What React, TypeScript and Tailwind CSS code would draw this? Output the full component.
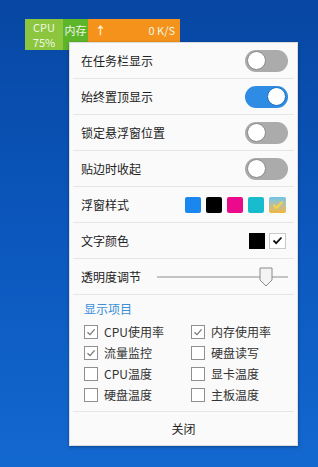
import React from "react";

const font = { fontFamily: '"Noto Sans CJK SC", "Noto Sans", sans-serif' };

const Toggle = ({ on }: { on?: boolean }) => (
  <div
    className={`w-[43px] h-[22px] rounded-full flex items-center px-[2px] ${
      on ? "bg-[#2e8ce4] justify-end" : "bg-[#ababab] justify-start"
    }`}
  >
    <div
      className={`w-[19px] h-[19px] rounded-full bg-white border ${
        on ? "border-[#1d6fbf]" : "border-[#8a8a8a]"
      }`}
    />
  </div>
);

const Row = ({ label, children }: { label: string; children?: React.ReactNode }) => (
  <div className="h-[36px] mx-[3px] border-b border-[#e6e6e6] flex items-center justify-between pl-[8px] pr-[6px]">
    <span className="text-[12px] text-[#222]">{label}</span>
    {children}
  </div>
);

const Check = ({ on }: { on?: boolean }) => (
  <div className="w-[14px] h-[14px] border border-[#8f8f8f] bg-white flex items-center justify-center">
    {on && (
      <svg width="10" height="10" viewBox="0 0 10 10">
        <path d="M1.5 5.2 L4 7.6 L8.6 2.4" fill="none" stroke="#777" strokeWidth="1.3" />
      </svg>
    )}
  </div>
);

const Item = ({ label, on }: { label: string; on?: boolean }) => (
  <div className="flex items-center gap-[6px] h-[21px]">
    <Check on={on} />
    <span className="text-[12px] text-[#333]">{label}</span>
  </div>
);

export default function App() {
  return (
    <div
      style={font}
      className="w-[318px] h-[467px] overflow-hidden bg-gradient-to-b from-[#0847a3] via-[#0b57bd] to-[#1368cf] pt-[19px] pl-[25px]"
    >
      <div className="flex h-[31px] text-[11px] text-[#eef7e6]">
        <div className="w-[38px] bg-[#8cc63e] flex flex-col items-center pt-[1px]">
          <span className="leading-[14px]">CPU</span>
          <span className="leading-[14px] mt-[1px]">75%</span>
        </div>
        <div className="w-[25px] bg-[#5db52a] flex justify-center leading-[14px] pt-[4px]">内存</div>
        <div className="w-[92px] bg-[#f5921c] flex justify-between leading-[14px] pt-[4px] pl-[7px] pr-[5px]">
          <span className="text-[#fff3d0] font-bold">↑</span>
          <span>0 K/S</span>
        </div>
      </div>

      <div className="relative z-10 -mt-[8px] ml-[44px] w-[229px] bg-[#fafafa] border border-[#dcdcdc] shadow-[0_1px_3px_rgba(0,0,0,0.3)]">
        <Row label="在任务栏显示">
          <Toggle />
        </Row>
        <Row label="始终置顶显示">
          <Toggle on />
        </Row>
        <Row label="锁定悬浮窗位置">
          <Toggle />
        </Row>
        <Row label="贴边时收起">
          <Toggle />
        </Row>
        <Row label="浮窗样式">
          <div className="flex gap-[5px] pr-[2px]">
            <div className="w-[16px] h-[16px] rounded-[2px] bg-[#1a87ee]" />
            <div className="w-[16px] h-[16px] rounded-[2px] bg-black" />
            <div className="w-[16px] h-[16px] rounded-[2px] bg-[#ec0a8c]" />
            <div className="w-[16px] h-[16px] rounded-[2px] bg-[#18bccc]" />
            <div className="w-[17px] h-[16px] rounded-[2px] bg-gradient-to-b from-[#6cc3e8] to-[#f2b431] flex items-center justify-center">
              <svg width="12" height="10" viewBox="0 0 12 10">
                <path d="M1.5 5 L4.5 8 L10.5 1.5" fill="none" stroke="#f7d24a" strokeWidth="2" />
              </svg>
            </div>
          </div>
        </Row>
        <Row label="文字颜色">
          <div className="flex gap-[4px] pr-[2px]">
            <div className="w-[16px] h-[16px] bg-black" />
            <div className="w-[17px] h-[16px] border border-[#c8c8c8] bg-white flex items-center justify-center">
              <svg width="11" height="9" viewBox="0 0 11 9">
                <path d="M1.5 4.5 L4.2 7.2 L9.5 1.5" fill="none" stroke="#111" strokeWidth="1.8" />
              </svg>
            </div>
          </div>
        </Row>
        <Row label="透明度调节">
          <div className="relative w-[131px] h-[20px] flex items-center">
            <div className="w-full h-[2px] bg-[#c4c4c4]" />
            <svg className="absolute left-[102px] top-[0px]" width="14" height="20" viewBox="0 0 14 20">
              <path d="M1 1 H13 V13 L7 19 L1 13 Z" fill="#f4f4f4" stroke="#8a8a8a" strokeWidth="1" />
            </svg>
          </div>
        </Row>

        <div className="px-[11px] pt-[4px] pb-[6px] mx-[3px] border-b border-[#e6e6e6]">
          <div className="text-[12px] text-[#3b8fd9] h-[20px] flex items-center">显示项目</div>
          <div className="grid grid-cols-[107px_1fr] pt-[2px]">
            <Item label="CPU使用率" on />
            <Item label="内存使用率" on />
            <Item label="流量监控" on />
            <Item label="硬盘读写" />
            <Item label="CPU温度" />
            <Item label="显卡温度" />
            <Item label="硬盘温度" />
            <Item label="主板温度" />
          </div>
        </div>

        <div className="h-[33px] flex items-center justify-center text-[12px] text-[#222]">关闭</div>
      </div>
    </div>
  );
}
